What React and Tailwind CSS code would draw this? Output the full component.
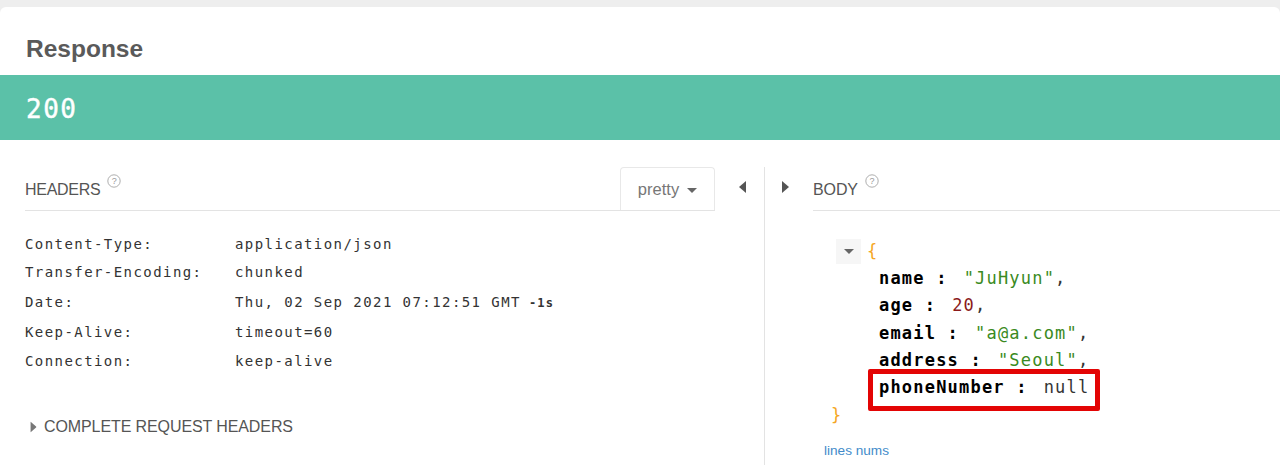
const sans = { fontFamily: '"Liberation Sans", Arial, sans-serif' }

const mono = '[font-family:"DejaVu_Sans_Mono",monospace]'

const headers = [
  ['Content-Type:', 'application/json', 'h-[28.4px]'],
  ['Transfer-Encoding:', 'chunked', 'h-[28.4px]'],
  ['Date:', 'Thu, 02 Sep 2021 07:12:51 GMT', 'h-[30.6px]'],
  ['Keep-Alive:', 'timeout=60', 'h-[30px]'],
  ['Connection:', 'keep-alive', 'h-[28.7px]'],
]

function Help() {
  return (
    <svg width="14" height="14" viewBox="0 0 14 14" className="text-[#999]">
      <circle cx="7" cy="7" r="6.2" fill="none" stroke="currentColor" strokeWidth="0.8" />
      <text x="7" y="10" textAnchor="middle" fontSize="9" fill="currentColor">?</text>
    </svg>
  )
}

function Tri({ dir, className }) {
  const pts = { down: '0,0 10,0 5,5', left: '7,0 7,12 0,6', right: '0,0 7,6 0,12' }[dir]
  const size = dir === 'down' ? [10, 5] : [7, 12]
  return (
    <svg width={size[0]} height={size[1]} className={className}>
      <polygon points={pts} fill="currentColor" />
    </svg>
  )
}

function Row({ name, children }) {
  return (
    <div className="h-[27.3px] pl-[66px] flex items-center whitespace-pre">
      <span className="font-bold text-black">{name} :</span>
      <span className="ml-[16px] flex">{children}</span>
    </div>
  )
}

export default function App() {
  return (
    <div className="h-[469px] w-[1280px] overflow-hidden bg-[#eeeeee] pt-[7px]" style={sans}>
      <div className="h-[462px] bg-white rounded-t-[6px]">
        <div className="h-[68px] pl-[26px] pt-[27px] text-[24.5px] leading-[30px] font-bold text-[#5a5a5a]">Response</div>
        <div className={`h-[65px] bg-[#5bc1a8] pl-[26px] pt-[4px] flex items-center text-white text-[26px] tracking-[1.5px] [-webkit-text-stroke:0.4px_white] ${mono}`}>200</div>

        <div className="flex h-[325px] pt-[27px]">
          <div className="w-[764px] pl-[25px] flex">
            <div className="w-[690px] shrink-0">
              <div className="flex h-[44px] border-b border-[#e3e3e3] relative">
                <div className="flex items-start pt-[14px] text-[#555] text-[16px] leading-[18px] tracking-[-0.3px]">
                  HEADERS
                  <span className="ml-[7px] -mt-[7px]"><Help /></span>
                </div>
                <div className="ml-auto w-[95px] h-[43px] border border-b-0 border-[#e8e8e8] rounded-t-[4px] flex items-center justify-center gap-[8px] text-[#777] text-[16.5px] bg-white">
                  pretty
                  <Tri dir="down" className="text-[#666] mt-[2px]" />
                </div>
              </div>
              <div className={`pt-[19px] text-[14px] tracking-[1.43px] text-[#333] ${mono}`}>
                {headers.map(([k, v, h]) => (
                  <div key={k} className={`flex items-center ${h}`}>
                    <span className="w-[210px] shrink-0">{k}</span>
                    <span>{v}</span>
                    {k === 'Date:' && <span className="ml-[8px] mt-[2px] text-[12px] tracking-[1.2px] font-bold">-1s</span>}
                  </div>
                ))}
              </div>
              <div className="mt-[39px] flex items-center text-[16px] tracking-[-0.1px] text-[#555] pl-[5px]">
                <Tri dir="right" className="text-[#777] mr-[7px] scale-90" />
                COMPLETE REQUEST HEADERS
              </div>
            </div>
            <div className="pl-[24px] pt-[14px]"><Tri dir="left" className="text-[#555]" /></div>
          </div>

          <div className="flex-1 border-l border-[#e3e3e3] flex">
            <div className="w-[48px] shrink-0 pl-[17px] pt-[14px]"><Tri dir="right" className="text-[#555]" /></div>
            <div className="flex-1">
              <div className="h-[44px] border-b border-[#e3e3e3] flex items-start pt-[14px] text-[#555] text-[16px] leading-[18px] tracking-[-0.1px]">
                BODY
                <span className="ml-[7px] -mt-[7px]"><Help /></span>
              </div>
              <div className={`pt-[27px] text-[17px] tracking-[1.2px] text-[#333] ${mono}`}>
                <div className="h-[27.3px] pl-[23px] flex items-center">
                  <span className="w-[25px] h-[25px] bg-[#f6f6f6] flex items-center justify-center"><Tri dir="down" className="text-[#666]" /></span>
                  <span className="ml-[6px] text-[#f5a623]">{'{'}</span>
                </div>
                <Row name="name"><span className="text-[#3a8a22]">"JuHyun"</span>,</Row>
                <Row name="age"><span className="text-[#8b1a1a]">20</span>,</Row>
                <Row name="email"><span className="text-[#3a8a22]">"a@a.com"</span>,</Row>
                <Row name="address"><span className="text-[#3a8a22]">"Seoul"</span>,</Row>
                <div className="relative">
                  <Row name="phoneNumber"><span>null</span></Row>
                  <div className="absolute left-[55px] top-[-5px] w-[232px] h-[42px] border-[5px] border-[#e30404] rounded-[2px]"></div>
                </div>
                <div className="h-[27.3px] pl-[18px] flex items-center text-[#f5a623]">{'}'}</div>
              </div>
              <div className="mt-[12px] pl-[11px] text-[13.6px] text-[#428bca]">lines nums</div>
            </div>
          </div>
        </div>
      </div>
    </div>
  )
}
